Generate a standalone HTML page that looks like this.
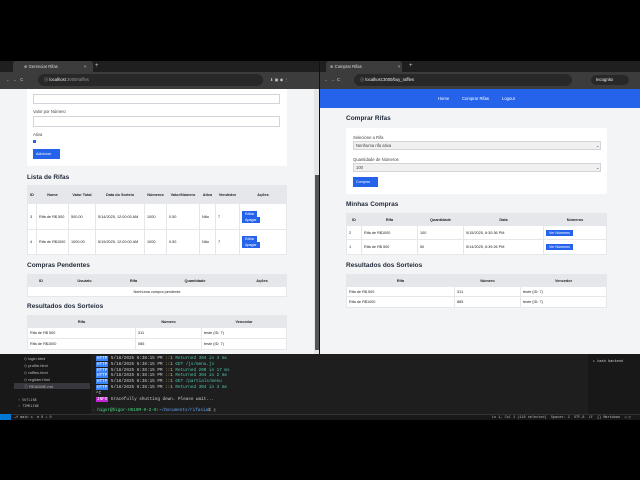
<!DOCTYPE html>
<html><head><meta charset="utf-8"><style>
*{margin:0;padding:0;box-sizing:border-box}
body{width:640px;height:480px;background:#000;position:relative;overflow:hidden;font-family:"Liberation Sans",sans-serif;color:#222}
.a{position:absolute}
.t{font-size:4.2px;white-space:nowrap}
.h{font-size:6.5px;font-weight:bold;color:#1f2937}
table{border-collapse:collapse;position:absolute;background:#fff;font-size:3.8px;table-layout:fixed}
td,th{border:0.6px solid #e5e7eb;padding:0 2px;text-align:left;vertical-align:middle}
th{background:#e5e7eb;text-align:center;font-weight:bold}
.btn{background:#2563eb;color:#fff;font-size:3.6px;display:inline-block;padding:1px 3px}
.inp{position:absolute;border:0.6px solid #d1d5db;background:#fff}
.mono{font-family:"Liberation Mono",monospace;font-size:4.3px;color:#ccc;white-space:nowrap}
.tag{background:#3b82f6;color:#fff;padding:0 1px}
</style></head><body>

<!-- LEFT BROWSER -->
<div class="a" style="left:0;top:61px;width:319px;height:11px;background:#1f1f1f"></div>
<div class="a" style="left:13px;top:61px;width:80px;height:12px;background:#3c3c3c;border-radius:3px 3px 0 0"></div>
<div class="a t" style="left:24px;top:64px;color:#ddd">⊕ Gerenciar Rifas</div>
<div class="a t" style="left:84px;top:64px;color:#ccc">×</div>
<div class="a t" style="left:95px;top:63px;color:#ccc;font-size:6px">+</div>
<div class="a" style="left:0;top:72px;width:319px;height:17px;background:#3c3c3c"></div>
<div class="a" style="left:38px;top:74px;width:225px;height:12px;background:#282828;border-radius:6px"></div>
<div class="a t" style="left:6px;top:77px;color:#ccc">←&nbsp;&nbsp;→&nbsp;&nbsp;&nbsp;C</div>
<div class="a t" style="left:44px;top:77px;color:#eee">ⓘ localhost<span style="color:#999">:3000/raffles</span></div>
<div class="a t" style="left:270px;top:77px;color:#ccc">⬇ ▣ ◉ ⋮</div>

<div class="a" style="left:0;top:89px;width:314px;height:265px;background:#f3f4f6"></div>
<div class="a" style="left:314px;top:89px;width:6px;height:265px;background:#e5e5e5"></div>
<div class="a" style="left:315px;top:175px;width:4px;height:175px;background:#555"></div>
<div class="a" style="left:27px;top:89px;width:260px;height:77px;background:#fff"></div>
<div class="inp" style="left:33px;top:94px;width:247px;height:10px"></div>
<div class="a t" style="left:33px;top:109px;color:#444">Valor por Número</div>
<div class="inp" style="left:33px;top:116px;width:247px;height:11px"></div>
<div class="a t" style="left:33px;top:132px;color:#444">Ativa</div>
<div class="a" style="left:33px;top:140px;width:3px;height:3px;background:#2563eb"></div>
<div class="a btn" style="left:33px;top:149px;width:27px;height:10px;line-height:8px">Adicionar</div>

<div class="a h" style="left:27px;top:174px">Lista de Rifas</div>
<table style="left:27px;top:185px;width:260px">
<tr style="height:18px"><th style="width:9px">ID</th><th style="width:32px">Nome</th><th style="width:27px">Valor Total</th><th style="width:49px">Data do Sorteio</th><th style="width:22px">Números</th><th style="width:33px">Valor/Número</th><th style="width:16px">Ativo</th><th style="width:24px">Vendedor</th><th>Ações</th></tr>
<tr style="height:26px"><td>3</td><td>Rifa de R$ 500</td><td>500.00</td><td>5/14/2025, 12:00:00 AM</td><td>1000</td><td>0.50</td><td>Não</td><td>7</td><td><span class="btn">Editar</span><br><span class="btn">Apagar</span></td></tr>
<tr style="height:25px"><td>4</td><td>Rifa de R$1000</td><td>1000.00</td><td>5/19/2025, 12:00:00 AM</td><td>1000</td><td>0.50</td><td>Não</td><td>7</td><td><span class="btn">Editar</span><br><span class="btn">Apagar</span></td></tr>
</table>

<div class="a h" style="left:27px;top:262px">Compras Pendentes</div>
<table style="left:27px;top:274px;width:260px">
<tr style="height:12px"><th style="width:27px">ID</th><th style="width:60px">Usuário</th><th style="width:38px">Rifa</th><th style="width:85px">Quantidade</th><th>Ações</th></tr>
<tr style="height:10px"><td colspan="5" style="text-align:center">Nenhuma compra pendente</td></tr>
</table>

<div class="a h" style="left:27px;top:303px">Resultados dos Sorteios</div>
<table style="left:27px;top:315px;width:260px">
<tr style="height:12px"><th style="width:108px">Rifa</th><th style="width:66px">Número</th><th>Vencedor</th></tr>
<tr style="height:11px"><td>Rifa de R$ 500</td><td>311</td><td>teste (ID: 7)</td></tr>
<tr style="height:11px"><td>Rifa de R$1000</td><td>085</td><td>teste (ID: 7)</td></tr>
</table>

<!-- RIGHT BROWSER -->
<div class="a" style="left:320px;top:61px;width:320px;height:11px;background:#1f1f1f"></div>
<div class="a" style="left:326px;top:61px;width:76px;height:12px;background:#3c3c3c;border-radius:3px 3px 0 0"></div>
<div class="a t" style="left:330px;top:64px;color:#ddd">⊕ Comprar Rifas</div>
<div class="a t" style="left:398px;top:64px;color:#ccc">×</div>
<div class="a t" style="left:409px;top:63px;color:#ccc;font-size:6px">+</div>
<div class="a" style="left:320px;top:72px;width:320px;height:17px;background:#3c3c3c"></div>
<div class="a" style="left:354px;top:74px;width:218px;height:12px;background:#282828;border-radius:6px"></div>
<div class="a t" style="left:324px;top:77px;color:#ccc">←&nbsp;&nbsp;→&nbsp;&nbsp;C</div>
<div class="a t" style="left:360px;top:77px;color:#eee">ⓘ localhost:3000/buy_raffles</div>
<div class="a" style="left:591px;top:75px;width:38px;height:10px;background:#282828;border-radius:5px"></div>
<div class="a t" style="left:596px;top:77px;color:#eee">Incognito</div>
<div class="a" style="left:320px;top:89px;width:320px;height:19px;background:#2563eb"></div>
<div class="a t" style="left:438px;top:96px;color:#fff">Home</div>
<div class="a t" style="left:462px;top:96px;color:#fff">Comprar Rifas</div>
<div class="a t" style="left:502px;top:96px;color:#fff">Logout</div>
<div class="a" style="left:320px;top:108px;width:320px;height:246px;background:#f3f4f6"></div>
<div class="a h" style="left:346px;top:115px">Comprar Rifas</div>
<div class="a" style="left:346px;top:128px;width:261px;height:66px;background:#fff"></div>
<div class="a t" style="left:353px;top:135px;color:#444">Selecione a Rifa</div>
<div class="inp" style="left:353px;top:141px;width:248px;height:9px;background:#f0f0f0"></div>
<div class="a t" style="left:356px;top:143px;color:#444">Nenhuma rifa ativa</div>
<div class="a t" style="left:596px;top:143px">⌄</div>
<div class="a t" style="left:353px;top:157px;color:#444">Quantidade de Números</div>
<div class="inp" style="left:353px;top:163px;width:248px;height:9px;background:#f0f0f0"></div>
<div class="a t" style="left:356px;top:165px;color:#444">100</div>
<div class="a t" style="left:596px;top:165px">⌄</div>
<div class="a btn" style="left:353px;top:177px;width:25px;height:10px;line-height:8px">Comprar</div>

<div class="a h" style="left:346px;top:201px">Minhas Compras</div>
<table style="left:346px;top:213px;width:261px">
<tr style="height:12px"><th style="width:15px">ID</th><th style="width:56px">Rifa</th><th style="width:46px">Quantidade</th><th style="width:80px">Data</th><th>Números</th></tr>
<tr style="height:14px"><td>2</td><td>Rifa de R$1000</td><td>100</td><td>5/15/2025, 6:30:36 PM</td><td><span class="btn">Ver Números</span></td></tr>
<tr style="height:15px"><td>1</td><td>Rifa de R$ 500</td><td>50</td><td>5/14/2025, 6:39:26 PM</td><td><span class="btn">Ver Números</span></td></tr>
</table>
<div class="a h" style="left:346px;top:262px">Resultados dos Sorteios</div>
<table style="left:346px;top:274px;width:261px">
<tr style="height:12px"><th style="width:108px">Rifa</th><th style="width:66px">Número</th><th>Vencedor</th></tr>
<tr style="height:10px"><td>Rifa de R$ 500</td><td>311</td><td>teste (ID: 7)</td></tr>
<tr style="height:11px"><td>Rifa de R$1000</td><td>885</td><td>teste (ID: 7)</td></tr>
</table>
<div class="a" style="left:319px;top:61px;width:1px;height:294px;background:#111"></div>

<!-- VS CODE -->
<div class="a" style="left:0;top:354px;width:640px;height:61px;background:#181818"></div>
<div class="a" style="left:14px;top:354px;width:77px;height:61px;background:#181818"></div>
<div class="a" style="left:91px;top:354px;width:497px;height:61px;background:#1e1e1e"></div>
<div class="a" style="left:14px;top:383px;width:76px;height:6px;background:#37373d"></div>
<div class="a mono" style="left:24px;top:355px;color:#bbb;line-height:7px;font-family:'Liberation Sans';font-size:4px">◇ login.html<br>◇ profile.html<br>◇ raffles.html<br>◇ register.html<br>ⓘ README.md</div>
<div class="a mono" style="left:18px;top:398px;color:#bbb;line-height:6px;font-size:3.5px">› OUTLINE<br>› TIMELINE</div>
<div class="a mono" style="left:96px;top:356px;line-height:5.8px">
<span class="tag">HTTP</span> 5/18/2025 6:38:15 PM <span style="color:#e5c07b">::1</span> <span style="color:#4ec9b0">Returned 304 in 3 ms</span><br>
<span class="tag">HTTP</span> 5/18/2025 6:38:15 PM <span style="color:#e5c07b">::1</span> <span style="color:#4ec9b0">GET /js/menu.js</span><br>
<span class="tag">HTTP</span> 5/18/2025 6:38:15 PM <span style="color:#e5c07b">::1</span> <span style="color:#4ec9b0">Returned 200 in 17 ms</span><br>
<span class="tag">HTTP</span> 5/18/2025 6:38:15 PM <span style="color:#e5c07b">::1</span> <span style="color:#4ec9b0">Returned 304 in 2 ms</span><br>
<span class="tag">HTTP</span> 5/18/2025 6:38:15 PM <span style="color:#e5c07b">::1</span> <span style="color:#4ec9b0">GET /partials/menu</span><br>
<span class="tag">HTTP</span> 5/18/2025 6:38:15 PM <span style="color:#e5c07b">::1</span> <span style="color:#4ec9b0">Returned 304 in 3 ms</span><br>
^C<br>
<span class="tag" style="background:#c026d3">INFO</span> Gracefully shutting down. Please wait...</div>
<div class="a mono" style="left:92px;top:408px"><span style="color:#888">◦</span> <span style="color:#4ade80">higor@higor-H510M-H-2-0</span>:<span style="color:#60a5fa">~/Documents/rifasia</span>$ ▯</div>
<div class="a mono" style="left:593px;top:359px;font-size:3.6px;color:#ccc">▸ bash backend</div>
<div class="a" style="left:0;top:414px;width:640px;height:6px;background:#181818;border-top:0.5px solid #333"></div>
<div class="a" style="left:0;top:414px;width:11px;height:6px;background:#0078d4"></div>
<div class="a mono" style="left:14px;top:415px;font-size:3.5px;color:#bbb">⎇ main ↻ &nbsp;⊗ 0 ⚠ 0</div>
<div class="a mono" style="left:492px;top:415px;font-size:3.5px;color:#bbb">Ln 1, Col 1 (118 selected)&nbsp; Spaces: 2&nbsp; UTF-8&nbsp; LF&nbsp; {} Markdown&nbsp; ♫ ◯</div>
</body></html>
